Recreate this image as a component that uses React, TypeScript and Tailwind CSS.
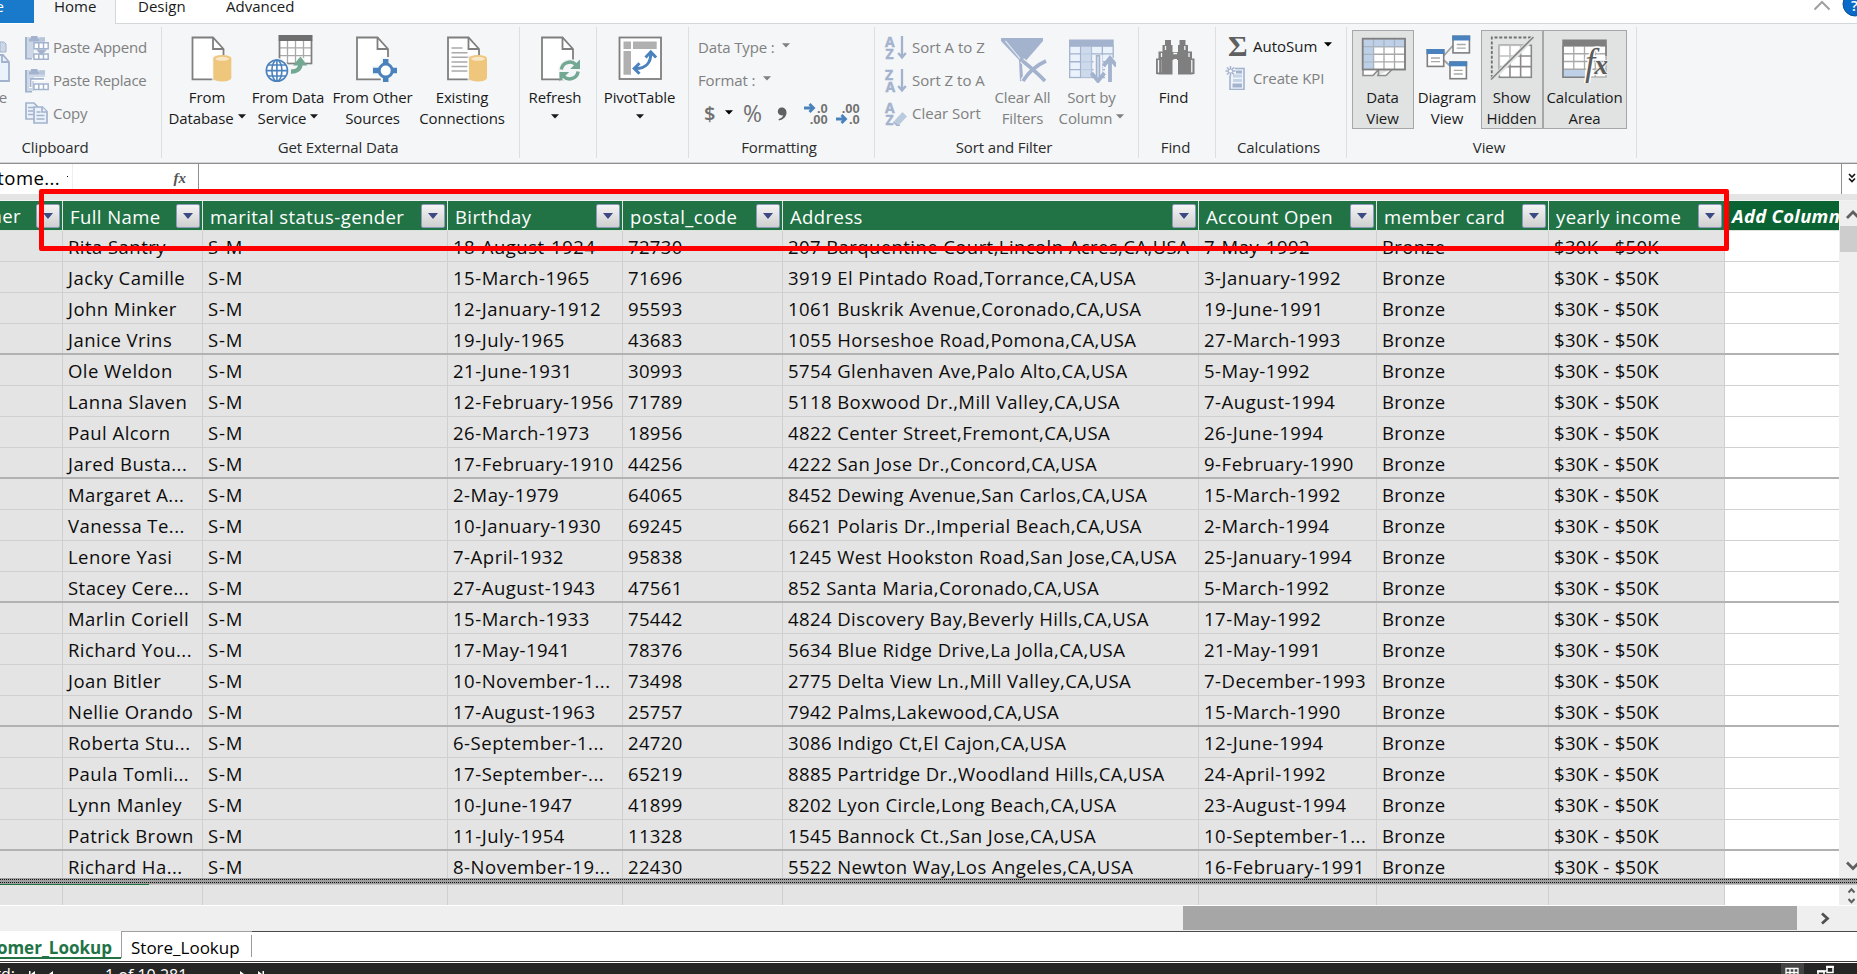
import React from "react";

const BLUE = "#4a82bd";
const PALE = "#a3b2cd";
const GRAY = "#7f7f7f";
const GREEN = "#73a892";

/* ---------- shared drawing helpers ---------- */

function BigIcon({ c, children }: { c: number; children: React.ReactNode }) {
  return (
    <svg width="48" height="48" viewBox={`${c - 24} 35 48 48`} className="block shrink-0" fill="none">
      {children}
    </svg>
  );
}

function SmallIcon({ x, y, children }: { x: number; y: number; children: React.ReactNode }) {
  return (
    <svg width="24" height="24" viewBox={`${x} ${y} 24 24`} className="block shrink-0" fill="none">
      {children}
    </svg>
  );
}

function Page({ x }: { x: number }) {
  return (
    <g stroke={GRAY} strokeWidth="1.8">
      <path d={`M${x} 37.5h20.5l10.5 11.5v30.3h-31z`} fill="#fff" />
      <path d={`M${x + 20.5} 37.5v11.5h10.5`} />
    </g>
  );
}

function Cylinder({ x }: { x: number }) {
  return (
    <g>
      <path d={`M${x - 1.5} 55h21v28h-21z`} fill="#f4f6f8" opacity="0.7" />
      <path d={`M${x} 58.5v19.5a9 3.4 0 0 0 18 0v-19.5z`} fill="#eec67c" />
      <ellipse cx={x + 9} cy="58.5" rx="9" ry="3.4" fill="#eec67c" />
      <ellipse cx={x + 9} cy="58.8" rx="7" ry="2" fill="#f8e6c4" />
    </g>
  );
}

type GridProps = { x: number; y: number; w: number; h: number; cols: number; rows: number; stroke?: string; fill?: string; sw?: number };

function Grid({ x, y, w, h, cols, rows, stroke = "#a9a9a9", fill = "#fff", sw = 1.3 }: GridProps) {
  const lines: string[] = [];
  for (let i = 1; i < cols; i++) lines.push(`M${x + (w * i) / cols} ${y}v${h}`);
  for (let i = 1; i < rows; i++) lines.push(`M${x} ${y + (h * i) / rows}h${w}`);
  return (
    <g stroke={stroke} strokeWidth={sw}>
      <rect x={x} y={y} width={w} height={h} fill={fill} />
      <path d={lines.join("")} />
    </g>
  );
}

function Caret({ className = "" }: { className?: string }) {
  return (
    <svg width="8" height="5" viewBox="0 0 8 5" className={`inline-block shrink-0 ${className}`}>
      <path d="M0 0.3h8L4 4.5z" fill="currentColor" />
    </svg>
  );
}

/* ---------- big ribbon icons ---------- */

const DatabaseIcon = () => (
  <BigIcon c={207.5}>
    <Page x={192} />
    <Cylinder x={212.8} />
  </BigIcon>
);

const ServiceIcon = () => (
  <BigIcon c={288.5}>
    <Grid x={279} y={40} w={32} h={23.5} cols={4} rows={3} />
    <path d="M279 41v22.5h32V41" stroke={GRAY} strokeWidth="1.6" />
    <rect x="278" y="35" width="34" height="6" fill="#6f6f6f" />
    <circle cx="276.4" cy="70.6" r="12.5" fill="#f4f6f8" />
    <path d="M290 72c8-1 11-5 10.500-14" stroke="#f4f6f8" strokeWidth="8" />
    <g stroke={BLUE} strokeWidth="1.6">
      <circle cx="276.4" cy="70.6" r="10.600" fill="#fff" />
      <ellipse cx="276.4" cy="70.6" rx="5" ry="10.600" />
      <path d="M276.4 60v21.200M265.800 70.6h21.200M267.500 65h17.800M267.500 76h17.800" />
    </g>
    <path d="M290.500 71.500c5 .3 9-2 9.500-7" stroke={GREEN} strokeWidth="4.400" />
    <path d="M292.500 65.500L300 56.500l6.800 9z" fill={GREEN} />
  </BigIcon>
);

const OtherIcon = () => (
  <BigIcon c={373}>
    <Page x={357} />
    <path d="M385.700 57v27M372 70.600h27" stroke="#f4f6f8" strokeWidth="10" />
    <path d="M385.700 59v23M373 70.600h24" stroke={BLUE} strokeWidth="5.500" />
    <circle cx="385.700" cy="70.600" r="6.500" fill="#fff" stroke={BLUE} strokeWidth="3" />
  </BigIcon>
);

const ExistingIcon = () => (
  <BigIcon c={462.5}>
    <Page x={447.500} />
    <path d="M451 48h11M451 52.700h16M451 57.300h23M451 62h16M451 66.500h16M451 71h16" stroke="#a9a9a9" strokeWidth="1.500" />
    <Cylinder x={468.500} />
  </BigIcon>
);

const RefreshIcon = () => (
  <BigIcon c={555.5}>
    <Page x={541.500} />
    <circle cx="569.200" cy="70.500" r="11.500" fill="#f4f6f8" />
    <path d="M560.800 69.500a8.600 8.600 0 0 1 14.500-5M577.600 71.500a8.600 8.600 0 0 1-14.500 5" stroke={GREEN} strokeWidth="3.400" />
    <path d="M579.500 59.500v9.500h-9.800zM558.900 81.500v-9.500h9.800z" fill={GREEN} />
  </BigIcon>
);

const PivotIcon = () => (
  <BigIcon c={640}>
    <rect x="619.500" y="37.500" width="41.500" height="41.500" fill="#fff" stroke={GRAY} strokeWidth="1.800" />
    <path d="M623.500 41.500h7.500v7.500h-7.500zM633 41.500h23.700v7.500H633zM623.500 51h7.500v23.700h-7.500z" fill="#b0b0b0" />
    <path d="M636 68.500c9 0 14.800-5 14.800-15" stroke={BLUE} strokeWidth="3" />
    <path d="M645.500 57.500l5.300-5.500 5.300 5.500M639.500 63.200l-5.300 5.300 5.300 5.300" stroke={BLUE} strokeWidth="3" />
  </BigIcon>
);

const ClearFiltersIcon = () => (
  <BigIcon c={1023}>
    <path d="M1001 38h42v3l-16.500 19v17l-6.500 4.500-1-21.500-18-19z" fill={PALE} />
    <path d="M1005.500 41l14.500 17.500" stroke="#dfe6f1" strokeWidth="1.200" />
    <path d="M1022 63.500l7 6-6 8z" fill="#f4f6f8" />
    <path d="M1022 60.500c5 4 15 12 23 20.500M1046 61c-9 4-18 12-23 20" stroke="#f4f6f8" strokeWidth="6" />
    <path d="M1022 60.500c5 4 15 12 23 20.500M1046 61c-9 4-18 12-23 20" stroke={PALE} strokeWidth="3.600" />
  </BigIcon>
);

const SortColumnIcon = () => (
  <BigIcon c={1092}>
    <Grid x={1069.700} y={46} w={43.500} h={31.500} cols={4} rows={4} stroke={PALE} fill="#eaf2fc" />
    <path d="M1081 46.500h10.500v31H1081z" fill="#c6d3e6" opacity="0.800" />
    <rect x="1069" y="39.500" width="44.700" height="7" fill={PALE} />
    <path d="M1098 55v28M1109.500 58v25" stroke="#f4f6f8" strokeWidth="9" />
    <path d="M1098 55v24" stroke={PALE} strokeWidth="4.500" />
    <path d="M1098 56.500v22" stroke="#d4deec" strokeWidth="1.500" />
    <path d="M1091.500 73l6.500 8 6.500-8M1110 82V60" stroke={PALE} strokeWidth="3.800" />
    <path d="M1103.500 66l6.500-8 6.500 8" stroke={PALE} strokeWidth="3.800" />
  </BigIcon>
);

const FindIcon = () => (
  <BigIcon c={1174}>
    <g fill={GRAY}>
      <path d="M1165 40h6v5h1.500v7h1v8h-1v14.500h-13l-3.500-.5V58.500h2.500v-7h4V45h2.500z" />
      <path d="M1185.500 40h-6v5h-1.500v7h-1v8h1v14.500h13l3.500-.5V58.500h-2.500v-7h-4V45h-2.500z" />
      <path d="M1171 52h8v7h-8z" />
    </g>
    <path d="M1158.500 60v12.500M1191.800 60v12.500M1161.500 53v4M1189 53v4M1165.500 46v4M1184.800 46v4M1173.300 53.500h3.800" stroke="#f4f6f8" strokeWidth="1.300" />
    <path d="M1161.500 59.500v13" stroke="#9a9a9a" />
  </BigIcon>
);

const DataViewIcon = () => (
  <BigIcon c={1383}>
    <Grid x={1363} y={39} w={42} h={30.500} cols={4} rows={4} />
    <path d="M1363 39h42v7.600h-31.500v23H1363z" fill="#bdd0e8" />
    <path d="M1363 46.600h42M1363 54.300h11M1363 62h11M1373.500 39v30M1384 39v8M1394.500 39v8" stroke="#a9b4c0" strokeWidth="1.200" />
    <path d="M1363 69.500v6h10l5.500-6M1377 75.500h9l6-6M1378.500 69.500v6" fill="#fff" stroke="#8d8d8d" strokeWidth="1.600" />
    <rect x="1362.700" y="38.700" width="42.300" height="30.800" stroke={GRAY} strokeWidth="1.800" />
  </BigIcon>
);

function Box({ x, y }: { x: number; y: number }) {
  return (
    <g>
      <rect x={x + 0.8} y={y + 0.8} width="16.400" height="16.600" fill="#fff" stroke={GRAY} strokeWidth="1.600" />
      <rect x={x} y={y} width="18" height="5" fill={BLUE} />
      <path d={`M${x + 4.500} ${y + 9}h9M${x + 4.500} ${y + 12.700}h9`} stroke="#a9a9a9" strokeWidth="1.300" />
    </g>
  );
}

const DiagramIcon = () => (
  <BigIcon c={1447.5}>
    <path d="M1443 56l10-11M1443 60l8 7" stroke="#a0a0a0" strokeWidth="1.800" />
    <Box x={1451.700} y={35.500} />
    <Box x={1426} y={49} />
    <Box x={1448.700} y={61.300} />
  </BigIcon>
);

const ShowHiddenIcon = () => (
  <BigIcon c={1512}>
    <Grid x={1499.300} y={45.300} w={32} h={32} cols={3} rows={3} stroke="#8a8a8a" sw={1.600} />
    <path d="M1499 45h31l-31 31z" fill="#fff" opacity="0.450" />
    <path d="M1491.800 78V37.500H1533" stroke="#707070" strokeWidth="1.800" strokeDasharray="3 1.800" />
    <path d="M1492 79.500L1533.500 37.500" stroke="#e0e3e2" strokeWidth="4.500" />
    <path d="M1491 79.500L1533.500 37" stroke="#858585" strokeWidth="1.700" />
  </BigIcon>
);

const CalcIcon = () => (
  <BigIcon c={1585}>
    <Grid x={1563} y={46} w={43} h={31} cols={4} rows={4} />
    <path d="M1563.500 70h21.500v7h-21.500z" fill="#bdd0e8" />
    <path d="M1563 46v31.300h24M1606 46v10" stroke={GRAY} strokeWidth="1.600" />
    <rect x="1562.300" y="39.500" width="44.500" height="6.800" fill={GRAY} />
    <text x="1585" y="74.500" fontFamily="Liberation Serif, serif" fontStyle="italic" fontSize="37" fill="#5c5c5c" stroke="#fff" strokeWidth="3" paintOrder="stroke">f</text>
    <text x="1594.500" y="73.500" fontFamily="Liberation Serif, serif" fontStyle="italic" fontWeight="bold" fontSize="27" fill="#5c5c5c" stroke="#eee" strokeWidth="2" paintOrder="stroke">x</text>
  </BigIcon>
);

/* ---------- small ribbon icons ---------- */

const ClipboardBase = ({ y }: { y: number }) => (
  <g>
    <path d={`M25 ${y + 1}h20v7H34v14h-9z`} fill="#ccd8e8" />
    <path d={`M25 ${y + 1}h2v21h5v1.500h-7zM29 ${y + 2.500}h2v-2.500h6.500v2.500h2v3H29z`} fill={PALE} />
    <path d={`M40 ${y + 1.500}h5v4h-5z`} fill="#b7c5da" />
  </g>
);

const PasteAppendIcon = () => (
  <SmallIcon x={25} y={35}>
    <ClipboardBase y={35} />
    <g stroke={PALE} strokeWidth="1.500" fill="#fff">
      <path d="M34 41.700h14.200v6H34zM34 53h14.200v5.200H34z" />
      <path d="M38.800 42v6M43.500 42v6M38.800 53v5M43.500 53v5" />
    </g>
    <path d="M36 48.500h11l-5.500 6z" fill={PALE} />
  </SmallIcon>
);

const PasteReplaceIcon = () => (
  <SmallIcon x={25} y={68}>
    <ClipboardBase y={68} />
    <path d="M30 78.500h15M30.500 78v9" stroke="#fff" strokeWidth="3" />
    <path d="M30 77.800h14M30.500 78v8" stroke={PALE} strokeWidth="1.800" />
    <g stroke={PALE} strokeWidth="1.500" fill="#fff">
      <path d="M34 83h14.200v5.500H34z" />
      <path d="M38.800 83v5M43.500 83v5" />
    </g>
  </SmallIcon>
);

const CopyIcon = () => (
  <SmallIcon x={25} y={102}>
    <g stroke={PALE} strokeWidth="1.700" fill="#eaf2fb">
      <path d="M26 103h8l3 3v13H26z" />
      <path d="M28 107.500h5M28 111h5M28 114.500h5" />
      <path d="M34 107h8.500l4.500 4.500v11.500H34z" />
      <path d="M42 107v5h5M36.500 112h4M36.500 115.500h8M36.500 119h8" />
    </g>
  </SmallIcon>
);

function Letters({ top, bottom }: { top: string; bottom: string }) {
  return (
    <g fontFamily="Open Sans, sans-serif" fontWeight="700" fontSize="14" fill={PALE} stroke={PALE} strokeWidth="0.400">
      <text x="1" y="11">{top}</text>
      <text x="1.500" y="22.500">{bottom}</text>
    </g>
  );
}

const SortIcon = ({ top, bottom }: { top: string; bottom: string }) => (
  <SmallIcon x={0} y={0}>
    <Letters top={top} bottom={bottom} />
    <path d="M18 0v21M14.200 17l3.800 4.500 3.800-4.500" stroke={PALE} strokeWidth="2.300" />
  </SmallIcon>
);

const ClearSortIcon = () => (
  <SmallIcon x={0} y={0}>
    <Letters top="A" bottom="Z" />
    <path d="M9.500 19L18 9l6 4.500L15 24h-5z" fill="#f4f6f8" />
    <path d="M10.500 18.500L18.500 10l4.500 4.500-8 8.500h-2.500z" fill="#bccade" />
    <path d="M9.500 19.500l3.500 4h3" stroke={PALE} strokeWidth="1.500" />
  </SmallIcon>
);

const KpiIcon = () => (
  <SmallIcon x={1225} y={66}>
    <rect x="1230" y="68.500" width="14" height="21" fill="#eef4fb" stroke={PALE} strokeWidth="1.600" />
    <path d="M1233 76h9M1233 80.500h9" stroke="#c6d3e6" strokeWidth="3" />
    <path d="M1232.500 83.500h9.500v4h-9.500zM1236 70.500h6v3h-6z" fill={PALE} />
    <circle cx="1230.500" cy="71" r="5" fill="#f4f6f8" />
    <path d="M1230.500 66v10M1225.500 71h10M1227 67.500l7 7M1234 67.500l-7 7" stroke={PALE} strokeWidth="1.500" />
    <circle cx="1230.500" cy="71" r="1.500" fill="#fff" />
  </SmallIcon>
);

/* ---------- ribbon building blocks ---------- */

function Group({ w, label, caption = "pr-[5px]", children }: { w: string; label?: string; caption?: string; children: React.ReactNode }) {
  return (
    <div className={`flex h-[131px] shrink-0 flex-col border-r border-[#dcdfe2] ${w}`}>
      <div className="flex h-[110px]">{children}</div>
      <div className={`h-[21px] text-center leading-[21px] text-[#2b2b2b] ${caption}`}>{label}</div>
    </div>
  );
}

type BigProps = { w: string; icon: React.ReactNode; lines: [string, string?]; caret?: boolean; active?: boolean; off?: boolean };

function BigButton({ w, icon, lines, caret, active, off }: BigProps) {
  return (
    <div
      className={`mt-[3px] flex h-[99px] shrink-0 flex-col items-center border pt-1 whitespace-nowrap ${w} ${
        active ? "border-[#a5a8a8] bg-[#e0e3e2]" : "border-transparent"
      } ${off ? "text-[#808080]" : "text-[#1a1a1a]"}`}
    >
      {icon}
      <div className="mt-1 h-[21px] pr-px leading-[21px]">{lines[0]}</div>
      <div className="flex h-[21px] items-center pr-px leading-[21px]">
        {lines[1]}
        {caret && <Caret className={lines[1] ? "mb-1 ml-1" : "mb-1"} />}
      </div>
    </div>
  );
}

function SmallRow({ icon, text, h = "h-[33px]" }: { icon: React.ReactNode; text: string; h?: string }) {
  return (
    <div className={`flex items-center whitespace-nowrap text-[#808080] ${h}`}>
      {icon}
      <span className="ml-1">{text}</span>
    </div>
  );
}

function Decimals({ up, down, arrowTop }: { up: string; down: string; arrowTop?: boolean }) {
  return (
    <svg width="24" height="22" viewBox="0 0 24 22" fill="none">
      <g fontFamily="Liberation Sans, sans-serif" fontWeight="700" fontSize="13" fill="#6f6f6f" textAnchor="end">
        <text x="23.500" y="9.500">{up}</text>
        <text x="23.500" y="20.500">{down}</text>
      </g>
      <g transform={arrowTop ? "translate(0 5)" : "translate(0 16)"} stroke={BLUE} strokeWidth="2.800">
        <path d="M0 0h9M5.500-4l4 4-4 4" />
      </g>
    </svg>
  );
}

function Ribbon() {
  return (
    <div className="flex h-[138px] bg-[#f4f6f8] pt-[3px] tracking-[-0.12px]">
      <Group w="w-[162px]" label="Clipboard" caption="pr-[51px]">
        <div className="flex w-[20px] flex-col overflow-hidden">
          <svg width="10" height="48" viewBox="0 35 10 48" fill="none" className="mt-2">
            <path d="M0 42h4l2 2v8H0z" fill="#ccd8e8" stroke={PALE} />
            <path d="M-4 55h7l6 7v19H-4z" fill="#eaf2fc" stroke={PALE} strokeWidth="1.800" />
            <path d="M2 55v7h7" stroke={PALE} strokeWidth="1.800" />
          </svg>
          <div className="mt-1 flex h-[21px] w-[7px] justify-end leading-[21px] text-[#808080]">Paste</div>
        </div>
        <div className="flex flex-col pt-1 pl-[5px] tracking-[-0.25px]">
          <SmallRow icon={<PasteAppendIcon />} text="Paste Append" />
          <SmallRow icon={<PasteReplaceIcon />} text="Paste Replace" />
          <SmallRow icon={<CopyIcon />} text="Copy" />
        </div>
      </Group>

      <Group w="w-[358px]" label="Get External Data">
        <div className="flex pl-[5px]">
          <BigButton w="w-[81px]" icon={<DatabaseIcon />} lines={["From", "Database"]} caret />
          <BigButton w="w-[81px]" icon={<ServiceIcon />} lines={["From Data", "Service"]} caret />
          <BigButton w="w-[88px]" icon={<OtherIcon />} lines={["From Other", "Sources"]} />
          <BigButton w="w-[91px]" icon={<ExistingIcon />} lines={["Existing", "Connections"]} />
        </div>
      </Group>

      <Group w="w-[77px]">
        <BigButton w="w-[71px]" icon={<RefreshIcon />} lines={["Refresh"]} caret />
      </Group>

      <Group w="w-[92px]">
        <BigButton w="w-[86px]" icon={<PivotIcon />} lines={["PivotTable"]} caret />
      </Group>

      <Group w="w-[186px]" label="Formatting">
        <div className="flex flex-col pt-1 pl-[9px] text-[#808080]">
          <div className="flex h-[33px] items-center">Data Type :<Caret className="mb-1 ml-[7px]" /></div>
          <div className="flex h-[33px] items-center">Format :<Caret className="mb-1 ml-[8px]" /></div>
          <div className="flex h-[33px] items-center text-[#707070]">
            <span className="ml-1.5 w-[12px] text-[20px] font-semibold">$</span>
            <Caret className="mb-0.5 ml-[9px] text-black" />
            <span className="ml-[10px] w-[22px] text-[23px] font-medium">%</span>
            <span className="ml-[12px] flex w-[11px] items-start overflow-hidden">
              <svg width="10" height="14" viewBox="0 0 10 14">
                <path d="M4.500 0.500C7.500 .5 9.500 2.500 9.500 5.500 9.500 9.500 6.500 12.500 2 13.500l-.5-1.200C4.500 11.200 6 9.800 6 8.300 2.800 8.800.8 7 .8 4.500.8 2.300 2.300.5 4.500.5z" fill="#606060" />
              </svg>
            </span>
            <span className="ml-[16px]"><Decimals up=".0" down=".00" arrowTop /></span>
            <span className="ml-[8px]"><Decimals up=".00" down=".0" /></span>
          </div>
        </div>
      </Group>

      <Group w="w-[264px]" label="Sort and Filter">
        <div className="flex w-[114px] flex-col pt-1 pl-[9px] tracking-normal">
          <SmallRow icon={<SortIcon top="A" bottom="Z" />} text="Sort A to Z" />
          <SmallRow icon={<SortIcon top="Z" bottom="A" />} text="Sort Z to A" />
          <SmallRow icon={<ClearSortIcon />} text="Clear Sort" />
        </div>
        <BigButton w="w-[68px]" icon={<ClearFiltersIcon />} lines={["Clear All", "Filters"]} off />
        <BigButton w="w-[70px]" icon={<SortColumnIcon />} lines={["Sort by", "Column"]} caret off />
      </Group>

      <Group w="w-[77px]" label="Find" caption="pr-[3px]">
        <BigButton w="w-[70px]" icon={<FindIcon />} lines={["Find"]} />
      </Group>

      <Group w="w-[131px]" label="Calculations">
        <div className="flex flex-col pt-[3px] pl-[9px]">
          <div className="flex h-[32px] items-center tracking-normal text-[#1a1a1a]">
            <span className="w-[28px] pl-[3px] font-['Liberation_Serif',serif] text-[30px] leading-[30px] font-bold text-[#5f5f5f]">Σ</span>
            <span>AutoSum</span>
            <Caret className="mb-1 ml-[7px] text-black" />
          </div>
          <SmallRow icon={<KpiIcon />} text="Create KPI" h="h-[32px]" />
        </div>
      </Group>

      <Group w="w-[290px]" label="View">
        <div className="flex pl-[5px]">
          <BigButton w="w-[62px]" icon={<DataViewIcon />} lines={["Data", "View"]} active />
          <BigButton w="w-[67px]" icon={<DiagramIcon />} lines={["Diagram", "View"]} />
          <BigButton w="w-[62px]" icon={<ShowHiddenIcon />} lines={["Show", "Hidden"]} active />
          <BigButton w="w-[84px]" icon={<CalcIcon />} lines={["Calculation", "Area"]} active />
        </div>
      </Group>
    </div>
  );
}

/* ---------- data grid ---------- */

const WIDTHS = ["w-[140px]", "w-[245px]", "w-[175px]", "w-[160px]", "w-[416px]", "w-[178px]", "w-[172px]", "w-[176px]"];
const TRACKING = [
  "tracking-[0.45px]",
  "tracking-[0.8px]",
  "tracking-[0.52px]",
  "tracking-[0.35px]",
  "tracking-[0.42px]",
  "tracking-[0.52px]",
  "tracking-[0.4px]",
  "tracking-[0.3px]",
];
const HEADERS = ["Full Name", "marital status-gender", "Birthday", "postal_code", "Address", "Account Open", "member card", "yearly income"];

const CUSTOMERS: [string, string, string, string, string][] = [
  ["Rita Santry", "18-August-1924", "72730", "207 Barquentine Court,Lincoln Acres,CA,USA", "7-May-1992"],
  ["Jacky Camille", "15-March-1965", "71696", "3919 El Pintado Road,Torrance,CA,USA", "3-January-1992"],
  ["John Minker", "12-January-1912", "95593", "1061 Buskrik Avenue,Coronado,CA,USA", "19-June-1991"],
  ["Janice Vrins", "19-July-1965", "43683", "1055 Horseshoe Road,Pomona,CA,USA", "27-March-1993"],
  ["Ole Weldon", "21-June-1931", "30993", "5754 Glenhaven Ave,Palo Alto,CA,USA", "5-May-1992"],
  ["Lanna Slaven", "12-February-1956", "71789", "5118 Boxwood Dr.,Mill Valley,CA,USA", "7-August-1994"],
  ["Paul Alcorn", "26-March-1973", "18956", "4822 Center Street,Fremont,CA,USA", "26-June-1994"],
  ["Jared Busta...", "17-February-1910", "44256", "4222 San Jose Dr.,Concord,CA,USA", "9-February-1990"],
  ["Margaret A...", "2-May-1979", "64065", "8452 Dewing Avenue,San Carlos,CA,USA", "15-March-1992"],
  ["Vanessa Te...", "10-January-1930", "69245", "6621 Polaris Dr.,Imperial Beach,CA,USA", "2-March-1994"],
  ["Lenore Yasi", "7-April-1932", "95838", "1245 West Hookston Road,San Jose,CA,USA", "25-January-1994"],
  ["Stacey Cere...", "27-August-1943", "47561", "852 Santa Maria,Coronado,CA,USA", "5-March-1992"],
  ["Marlin Coriell", "15-March-1933", "75442", "4824 Discovery Bay,Beverly Hills,CA,USA", "17-May-1992"],
  ["Richard You...", "17-May-1941", "78376", "5634 Blue Ridge Drive,La Jolla,CA,USA", "21-May-1991"],
  ["Joan Bitler", "10-November-1...", "73498", "2775 Delta View Ln.,Mill Valley,CA,USA", "7-December-1993"],
  ["Nellie Orando", "17-August-1963", "25757", "7942 Palms,Lakewood,CA,USA", "15-March-1990"],
  ["Roberta Stu...", "6-September-1...", "24720", "3086 Indigo Ct,El Cajon,CA,USA", "12-June-1994"],
  ["Paula Tomli...", "17-September-...", "65219", "8885 Partridge Dr.,Woodland Hills,CA,USA", "24-April-1992"],
  ["Lynn Manley", "10-June-1947", "41899", "8202 Lyon Circle,Long Beach,CA,USA", "23-August-1994"],
  ["Patrick Brown", "11-July-1954", "11328", "1545 Bannock Ct.,San Jose,CA,USA", "10-September-1..."],
  ["Richard Ha...", "8-November-19...", "22430", "5522 Newton Way,Los Angeles,CA,USA", "16-February-1991"],
];

function FilterButton() {
  return (
    <span className="mr-0.5 flex h-6 w-6 shrink-0 items-center justify-center rounded-[2px] border border-[#8d99bb] bg-linear-to-b from-[#f4f4f4] to-[#cfcfcf]">
      <svg width="10" height="6" viewBox="0 0 10 6">
        <path d="M0 0h10L5 6z" fill="#3c4a83" />
      </svg>
    </span>
  );
}

function HeaderRow() {
  return (
    <div className="flex h-[30px] shrink-0 border-b border-[#d9e3dc] bg-[#217346] text-[18.5px] leading-[29px] tracking-[0.42px] text-white">
      <div className="flex w-[63px] items-center justify-between border-r border-[#dfe5e1]">
        <span className="flex w-[21px] justify-end">Customer</span>
        <FilterButton />
      </div>
      {HEADERS.map((h, i) => (
        <div key={h} className={`flex items-center justify-between border-r border-[#dfe5e1] pl-[7px] whitespace-nowrap ${WIDTHS[i]}`}>
          <span className="pt-px">{h}</span>
          <FilterButton />
        </div>
      ))}
      <div className="w-[114px] overflow-hidden bg-[#0a6332] pl-[7px] font-bold tracking-[0.3px] whitespace-nowrap italic">Add Column</div>
    </div>
  );
}

function DataRow({ index }: { index: number }) {
  const [name, born, zip, addr, opened] = CUSTOMERS[index];
  const values = [name, "S-M", born, zip, addr, opened, "Bronze", "$30K - $50K"];
  const edge = index % 4 === 3 ? "border-b-2 border-[#b1b1b1]" : "border-b border-[#d0d0d0]";
  return (
    <div className="flex h-[31px] shrink-0 bg-white text-[18.5px] text-[#0c0c0c]">
      <div className={`w-[63px] bg-[#e4e4e4] ${edge}`}>
        <div className="h-full border-r border-[#d0d0d0]" />
      </div>
      {values.map((v, i) => (
        <div key={i} className={`bg-[#e4e4e4] ${WIDTHS[i]} ${edge}`}>
          <div className={`h-full border-r border-[#d0d0d0] pl-[5px] leading-[32px] whitespace-nowrap ${TRACKING[i]}`}>{v}</div>
        </div>
      ))}
      <div className={`w-[114px] ${edge}`} />
    </div>
  );
}

function CalculationRow() {
  return (
    <div className="flex h-[21px] border-b border-white">
      <div className="w-[63px] border-r border-[#d0d0d0] bg-[#e4e4e4]" />
      {WIDTHS.map((w) => (
        <div key={w} className={`border-r border-[#d0d0d0] bg-[#e4e4e4] ${w}`} />
      ))}
      <div className="w-[114px] bg-white" />
      <div className="grow bg-[#efefef]">
        <svg width="16" height="20" viewBox="0 0 16 20" fill="none" className="ml-0.5">
          <path d="M7.500 7.500l3-3.200 3 3.200M7.500 14l3 3.200 3-3.200" stroke="#606060" strokeWidth="2" />
        </svg>
      </div>
    </div>
  );
}

function DataGrid() {
  return (
    <div className="relative">
      <div className="h-[6px] bg-[#e4e4e4]" />
      <div className="h-px bg-[#f2f2f2]" />
      <div className="flex h-[677px]">
        <div className="flex w-[1839px] shrink-0 flex-col overflow-hidden">
          <HeaderRow />
          {CUSTOMERS.map((_, i) => (
            <DataRow key={i} index={i} />
          ))}
        </div>
        <div className="flex grow flex-col bg-[#efefef] pl-px">
          <svg width="17" height="25" viewBox="0 0 17 25" fill="none">
            <path d="M7 17l6-6 6 6" stroke="#606060" strokeWidth="2.800" />
          </svg>
          <div className="h-[26px] bg-[#cdcdcd]" />
          <svg width="17" height="25" viewBox="0 0 17 25" fill="none" className="mt-auto">
            <path d="M7 9.500l6 6 6-6" stroke="#606060" strokeWidth="2.800" />
          </svg>
        </div>
      </div>
      <div className="h-[6px] bg-[#9f9f9f]">
        <svg width="1857" height="6" fill="none">
          <path d="M0 1.500h1857M0 4.500h1857" stroke="#111" strokeWidth="1" strokeDasharray="1 1" />
        </svg>
      </div>
      <div className="flex h-px bg-[#c4c4c4]">
        <div className="w-[149px] bg-[#217346]" />
      </div>
      <CalculationRow />
      <div className="absolute top-[-5px] left-[39px] h-[62px] w-[1690px] rounded-[2px] border-5 border-[#ff0000]" />
    </div>
  );
}

/* ---------- page ---------- */

export default function App() {
  return (
    <div className="h-[974px] w-[1857px] overflow-hidden bg-white font-['Open_Sans',sans-serif] text-[15px] text-[#1a1a1a]">
      <div className="flex h-6 items-stretch">
        <div className="flex h-[23px] w-[34px] bg-[#1979ca]">
          <span className="flex w-1 justify-end leading-[13px] text-white">File</span>
        </div>
        <div className="w-[82px] border-r border-[#d5d8db] bg-[#f4f6f8] pl-5 leading-[13px]">Home</div>
        <div className="flex grow border-b border-[#d5d8db] leading-[13px]">
          <span className="ml-[22px] w-[88px]">Design</span>
          <span>Advanced</span>
          <svg width="45" height="23" viewBox="0 0 45 23" fill="none" className="ml-auto">
            <path d="M2.500 9.500L10 2l7.500 7.500" stroke="#a0a0a0" strokeWidth="2" />
            <circle cx="43" cy="4" r="12" fill="#0a6ac8" stroke="#0b4f97" />
            <text x="39" y="11" fill="#fff" fontFamily="Open Sans, sans-serif" fontSize="15" fontWeight="600">?</text>
          </svg>
        </div>
      </div>

      <Ribbon />

      <div className="mt-px flex h-[32px] border-y border-[#8f8f8f] bg-white ring-1 ring-[#d4d4d4]">
        <div className="flex w-[73px] items-center border-r border-[#eeeeee] pb-0.5 text-[18.5px] text-black">
          <span className="flex w-[60px] justify-end tracking-[0.400px]">Custome...</span>
          <span className="mb-1 ml-[7px] h-px w-px bg-black" />
        </div>
        <div className="flex w-[126px] items-center justify-end border-r border-[#8f8f8f] pr-[12px] pb-0.5 font-['Liberation_Serif',serif] text-[15px] leading-[20px] font-bold text-[#555] italic">
          fx
        </div>
        <div className="grow" />
        <div className="flex w-[16px] items-center border-l border-[#8f8f8f] pb-0.5 pl-1.5">
          <svg width="8" height="10" viewBox="0 0 8 10" fill="none">
            <path d="M1 1l3 3 3-3M1 5.500l3 3 3-3" stroke="#111" strokeWidth="1.600" />
          </svg>
        </div>
      </div>

      <div className="-mt-px">
        <DataGrid />
      </div>

      <div className="flex h-[25px] bg-[#efefef]">
        <div className="ml-[1183px] h-[24px] w-[614px] bg-[#a6a6a6]" />
        <svg width="40" height="24" viewBox="0 0 40 24" fill="none">
          <path d="M25 7.500l5.500 5-5.500 5" stroke="#505050" strokeWidth="2.800" />
        </svg>
      </div>

      <div className="flex h-[30px] items-start text-[17px]">
        <div className="flex h-[28px] w-[121px] flex-col border-b-2 border-[#217346]">
          <span className="flex w-[112px] justify-end pt-px leading-[32px] font-bold text-[#217346]">Customer_Lookup</span>
        </div>
        <div className="flex h-[27px] w-[131px] border-t border-l border-[#a0a0a0] pl-[9px] leading-[31px] text-black">
          Store_Lookup
          <div className="mt-[3px] ml-auto h-[22px] w-px bg-[#9a9a9a]" />
        </div>
        <div className="h-px grow bg-[#4a4a4a]" />
      </div>
      <div className="h-px bg-[#3a3a3a]" />
      <div className="h-px bg-white" />
      <div className="flex h-[11px] items-start overflow-hidden bg-[#262626] text-[16px] leading-[22px] text-white">
        <span className="flex w-[15px] justify-end">Record:</span>
        <svg width="40" height="11" viewBox="0 0 40 11" className="ml-[13px]">
          <path d="M1 8h1.500v3H1zM3 11l4-3v3zM21 11l4-3v3z" fill="#fff" />
        </svg>
        <span className="mt-px ml-[37px] w-[90px]">1 of 10,281</span>
        <svg width="30" height="11" viewBox="0 0 30 11" className="ml-[44px]">
          <path d="M1 8l4 3H1zM19 8l4 3h-4zM23.500 8H25v3h-1.500z" fill="#fff" />
        </svg>
        <div className="ml-auto flex">
          <div className="h-[11px] w-[23px] bg-[#444] pl-1">
            <svg width="14" height="11" viewBox="0 0 14 11" fill="none" className="mt-1">
              <path d="M1 1.500h12v12H1zM5 1v12M9 1v12M1 5.500h12" stroke="#fff" strokeWidth="1.300" />
            </svg>
          </div>
          <svg width="53" height="11" viewBox="0 0 53 11" fill="none" className="mt-0.5">
            <path d="M23 1.500h6v6h-6zM14 6h6v6h-6zM20 7l3-2" stroke="#fff" strokeWidth="1.500" />
            <path d="M22 1h8v2h-8zM13 5.500h8v2h-8z" fill="#fff" />
          </svg>
        </div>
      </div>
    </div>
  );
}
